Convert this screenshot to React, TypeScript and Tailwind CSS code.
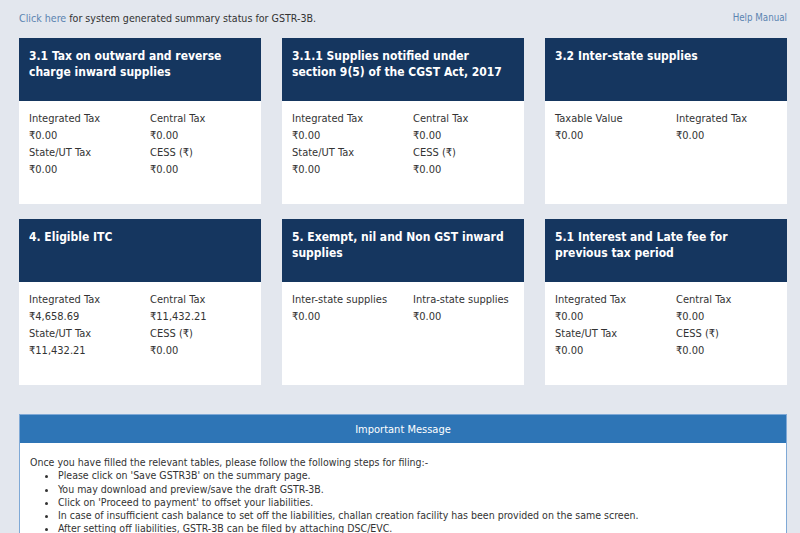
import React from "react";

type Cell = { label: string; value: string };

type Tile = {
  title: string;
  cells: Cell[];
};

const tiles: Tile[] = [
  {
    title: "3.1 Tax on outward and reverse charge inward supplies",
    cells: [
      { label: "Integrated Tax", value: "₹0.00" },
      { label: "Central Tax", value: "₹0.00" },
      { label: "State/UT Tax", value: "₹0.00" },
      { label: "CESS (₹)", value: "₹0.00" },
    ],
  },
  {
    title: "3.1.1 Supplies notified under section 9(5) of the CGST Act, 2017",
    cells: [
      { label: "Integrated Tax", value: "₹0.00" },
      { label: "Central Tax", value: "₹0.00" },
      { label: "State/UT Tax", value: "₹0.00" },
      { label: "CESS (₹)", value: "₹0.00" },
    ],
  },
  {
    title: "3.2 Inter-state supplies",
    cells: [
      { label: "Taxable Value", value: "₹0.00" },
      { label: "Integrated Tax", value: "₹0.00" },
    ],
  },
  {
    title: "4. Eligible ITC",
    cells: [
      { label: "Integrated Tax", value: "₹4,658.69" },
      { label: "Central Tax", value: "₹11,432.21" },
      { label: "State/UT Tax", value: "₹11,432.21" },
      { label: "CESS (₹)", value: "₹0.00" },
    ],
  },
  {
    title: "5. Exempt, nil and Non GST inward supplies",
    cells: [
      { label: "Inter-state supplies", value: "₹0.00" },
      { label: "Intra-state supplies", value: "₹0.00" },
    ],
  },
  {
    title: "5.1 Interest and Late fee for previous tax period",
    cells: [
      { label: "Integrated Tax", value: "₹0.00" },
      { label: "Central Tax", value: "₹0.00" },
      { label: "State/UT Tax", value: "₹0.00" },
      { label: "CESS (₹)", value: "₹0.00" },
    ],
  },
];

const steps = [
  "Please click on 'Save GSTR3B' on the summary page.",
  "You may download and preview/save the draft GSTR-3B.",
  "Click on 'Proceed to payment' to offset your liabilities.",
  "In case of insufficient cash balance to set off the liabilities, challan creation facility has been provided on the same screen.",
  "After setting off liabilities, GSTR-3B can be filed by attaching DSC/EVC.",
];

const TileCard = ({ tile }: { tile: Tile }) => (
  <div className="flex h-[166px] flex-col bg-white">
    <div className="h-[63px] bg-[#15365f] px-[10px] pt-[11px] text-[12px] font-bold leading-[15.5px] text-white">
      {tile.title}
    </div>
    <div className="grid grid-cols-2 pt-[9px] text-[11px] leading-[17px] text-[#333]">
      {tile.cells.map((c) => (
        <div key={c.label} className="pl-[10px]">
          <div>{c.label}</div>
          <div>{c.value}</div>
        </div>
      ))}
    </div>
  </div>
);

export default function App() {
  return (
    <div
      className="h-[533px] overflow-hidden bg-[#e3e7ee] pl-[19px] pr-[13px] pt-[11px]"
      style={{ fontFamily: '"DejaVu Sans Condensed", "DejaVu Sans", sans-serif' }}
    >
      {/* Top links */}
      <div className="flex items-center justify-between text-[10.6px] leading-[14px] text-[#333]">
        <div>
          <span className="text-[#5b84b1]">Click here</span> for system generated summary status for GSTR-3B.
        </div>
        <span className="text-[9.7px] text-[#5b84b1]">Help Manual</span>
      </div>

      {/* Tiles */}
      <div className="mt-[13px] grid grid-cols-3 gap-x-[21px] gap-y-[15px]">
        {tiles.map((t) => (
          <TileCard key={t.title} tile={t} />
        ))}
      </div>

      {/* Important message */}
      <div className="mt-[29px] border border-[#7fa9d6] bg-white">
        <div className="flex h-[28px] items-center justify-center bg-[#2e75b6] pt-[3px] text-[11px] text-white">
          Important Message
        </div>
        <div className="px-[10px] pt-[13px] text-[10.5px] leading-[13.3px] text-[#333]">
          <div>Once you have filled the relevant tables, please follow the following steps for filing:-</div>
          <ul className="list-disc pl-[28px]">
            {steps.map((s) => (
              <li key={s}>{s}</li>
            ))}
          </ul>
        </div>
      </div>
    </div>
  );
}
